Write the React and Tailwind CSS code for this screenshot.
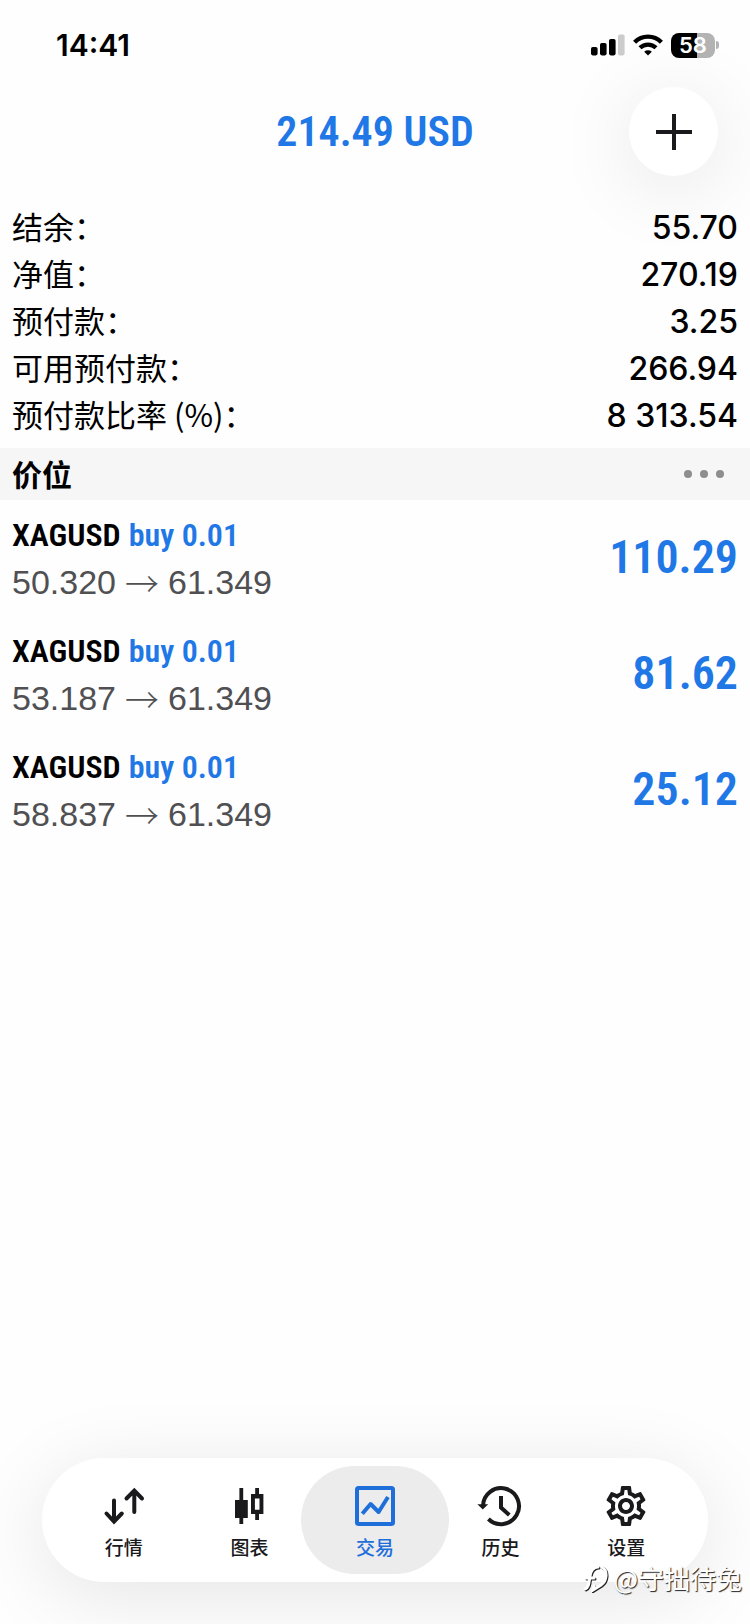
import { MdOutlineSettings } from "react-icons/md";

const summary = [
    { label: "结余：", value: "55.70" },
    { label: "净值：", value: "270.19" },
    { label: "预付款：", value: "3.25" },
    { label: "可用预付款：", value: "266.94" },
    { label: "预付款比率 (%)：", value: "8 313.54" },
]

const positions = [
    { id: 1, symbol: "XAGUSD", side: "buy 0.01", open: "50.320", current: "61.349", profit: "110.29" },
    { id: 2, symbol: "XAGUSD", side: "buy 0.01", open: "53.187", current: "61.349", profit: "81.62" },
    { id: 3, symbol: "XAGUSD", side: "buy 0.01", open: "58.837", current: "61.349", profit: "25.12" },
]

const QuotesIcon = () => (
    <svg viewBox="0 0 48 48" className="size-12" fill="none" stroke="currentColor" strokeWidth="4" strokeLinecap="round" aria-hidden="true">
        <path d="M14 18.5V39M6.5 31.5L14 39.5L21.8 31.5" />
        <path d="M34.3 30V9M26.5 16.5L34.3 8.5L42 16.5" />
    </svg>
)

const ChartIcon = () => (
    <svg viewBox="0 0 48 48" className="size-12" fill="currentColor" aria-hidden="true">
        <path d="M14.4 6h3.8v12h4.6v18h-4.6v6h-3.8v-6H10V18h4.4z" />
        <path fillRule="evenodd" d="M30.2 6H34v6h4.4v20H34v6h-3.8v-6H26V12h4.2zM29.9 16.5v11.3h4.6V16.5z" />
    </svg>
)

const TradeIcon = () => (
    <svg viewBox="0 0 48 48" className="size-12" fill="none" stroke="currentColor" strokeWidth="4" aria-hidden="true">
        <rect x="6" y="6" width="36" height="36" rx="1.6" />
        <path d="M11.3 31.7L19.6 22L27.6 30L37 15" strokeLinejoin="round" />
    </svg>
)

const HistoryIcon = () => (
    <svg viewBox="0 0 48 48" className="size-12" fill="none" stroke="currentColor" strokeWidth="4" aria-hidden="true">
        <path d="M6 24A18 18 0 1 1 11.4 37" />
        <path d="M24 14V25.5L32.3 33" />
        <path d="M0.4 22.2H11.2L5.8 27.6z" fill="currentColor" stroke="none" />
    </svg>
)

const tabs = [
    { name: "行情", icon: <QuotesIcon /> },
    { name: "图表", icon: <ChartIcon /> },
    { name: "交易", icon: <TradeIcon />, active: true },
    { name: "历史", icon: <HistoryIcon /> },
    { name: "设置", icon: <MdOutlineSettings className="size-12" aria-hidden="true" /> },
]

const StatusBar = () => {
    return (
        <div className="flex h-[87px] items-center justify-between pt-[3px] pr-[31px] pl-14 font-[Inter,sans-serif]">
            <span className="text-[30px] leading-none font-semibold text-black">14:41</span>
            <div className="flex items-center gap-2">
                <svg viewBox="0 0 34 22" className="h-[22px] w-[34px]" aria-hidden="true">
                    <rect x="0" y="13" width="6.6" height="8.4" rx="1.8" />
                    <rect x="9" y="9" width="6.6" height="12.4" rx="1.8" />
                    <rect x="18" y="5" width="6.6" height="16.4" rx="1.8" />
                    <rect x="27" y="0.4" width="6.6" height="21" rx="1.8" fill="#cccccc" />
                </svg>
                <svg viewBox="0 0 30 22" className="h-[22px] w-[30px]" fill="none" stroke="#000" aria-hidden="true">
                    <path d="M1.6 8.2A19 19 0 0 1 28.4 8.2" strokeWidth="4.4" />
                    <path d="M7 13.8A11.5 11.5 0 0 1 23 13.8" strokeWidth="4.2" />
                    <path d="M15 21.4L11.2 17.8A5.6 5.6 0 0 1 18.8 17.8z" fill="#000" stroke="none" />
                </svg>
                <div className="flex items-center gap-px">
                    <span className="flex h-[25px] w-11 items-center justify-center rounded-[8px] bg-linear-to-r from-black from-58% to-[#b3b3b3] to-58% text-[22px] leading-none font-semibold text-white">58</span>
                    <span className="h-2 w-[3px] rounded-r-full bg-[#b3b3b3]"></span>
                </div>
            </div>
        </div>
    )
}

const Position = ({ item }) => {
    return (
        <li className="flex h-29 items-center justify-between px-3">
            <div className="flex flex-col pt-[2px]">
                <p className="flex gap-2 font-['Roboto_Condensed',sans-serif] text-[32px] leading-[47px] font-semibold">
                    <span className="text-black">{item.symbol}</span>
                    <span className="text-[#1f78e6]">{item.side}</span>
                </p>
                <p className="flex gap-[9px] font-['Liberation_Sans',sans-serif] text-[34px] leading-[47px] text-[#505053]">
                    <span>{item.open}</span>
                    <span className="font-['Noto_Sans_CJK_SC',sans-serif] font-light">→</span>
                    <span>{item.current}</span>
                </p>
            </div>
            <span className="pb-[2px] font-['Roboto_Condensed',sans-serif] text-[46px] leading-[47px] font-semibold text-[#1f78e6]">{item.profit}</span>
        </li>
    )
}

const App = () => {
    return (
        <div className="relative flex min-h-screen flex-col overflow-hidden bg-[#fefefe] font-['Noto_Sans_CJK_SC',sans-serif]">
            <StatusBar />
            <header className="grid grid-cols-[1fr_auto_1fr] items-center px-8">
                <h1 className="col-start-2 font-['Roboto_Condensed',sans-serif] text-[42px] leading-none font-semibold text-[#1f78e6]">214.49 USD</h1>
                <button type="button" aria-label="新订单" className="flex size-[89px] items-center justify-center justify-self-end rounded-full bg-white shadow-[0_12px_80px_rgba(0,0,0,0.1)]">
                    <svg viewBox="0 0 36 36" className="size-9" stroke="#1a1a1c" strokeWidth="4" aria-hidden="true">
                        <path d="M18 0V36M0 18H36" />
                    </svg>
                </button>
            </header>
            <main>
                <dl className="mt-7 px-3 pb-[9px] text-black">
                    {summary.map((row) => (
                        <div key={row.label} className="flex h-[47px] items-center justify-between">
                            <dt className="pb-1 text-[31px] leading-none">{row.label}</dt>
                            <dd className="font-[Inter,sans-serif] text-[32px] leading-none font-medium">{row.value}</dd>
                        </div>
                    ))}
                </dl>
                <div className="flex h-[52px] items-center justify-between bg-[#f6f6f6] px-3">
                    <h2 className="pb-[2px] text-[30px] leading-none font-bold text-black">价位</h2>
                    <button type="button" aria-label="更多" className="flex items-center gap-2 px-[14px] py-3">
                        <span className="size-2 rounded-full bg-[#8e8e8e]"></span>
                        <span className="size-2 rounded-full bg-[#8e8e8e]"></span>
                        <span className="size-2 rounded-full bg-[#8e8e8e]"></span>
                    </button>
                </div>
                <ul>
                    {positions.map((item) => (
                        <Position key={item.id} item={item} />
                    ))}
                </ul>
            </main>
            <nav className="mx-[42px] mt-auto mb-[42px] grid grid-cols-5 rounded-full bg-white px-[19px] py-2 shadow-[0_14px_80px_rgba(0,0,0,0.1)]">
                {tabs.map((tab) => (
                    <button
                        key={tab.name}
                        type="button"
                        aria-current={tab.active ? "page" : undefined}
                        className={`-mx-[11px] flex h-27 flex-col items-center justify-center gap-[7px] rounded-full pb-px ${tab.active ? "bg-[#ececec] text-[#1f6fdb]" : "text-[#1a1a1c]"}`}
                    >
                        {tab.icon}
                        <span className="text-[19px] leading-5 font-medium">{tab.name}</span>
                    </button>
                ))}
            </nav>
            <div className="absolute right-2 bottom-8 flex items-center gap-1 text-white">
                <svg viewBox="0 0 26 28" className="h-7 w-[26px] drop-shadow-[1px_1px_0px_#222222]" fill="none" stroke="#fff" strokeWidth="3" strokeLinecap="round" aria-hidden="true">
                    <path d="M2 25C6 24 6 18 7 12C8 6 11 3 15 3M3 14H11" />
                    <path d="M19 3C25 7 24 17 18 21L10 26L11 22" />
                </svg>
                <span className="text-[26px] leading-7 [text-shadow:1px_1px_1px_#222222]">@守拙待兔</span>
            </div>
        </div>
    )
}

export default App
